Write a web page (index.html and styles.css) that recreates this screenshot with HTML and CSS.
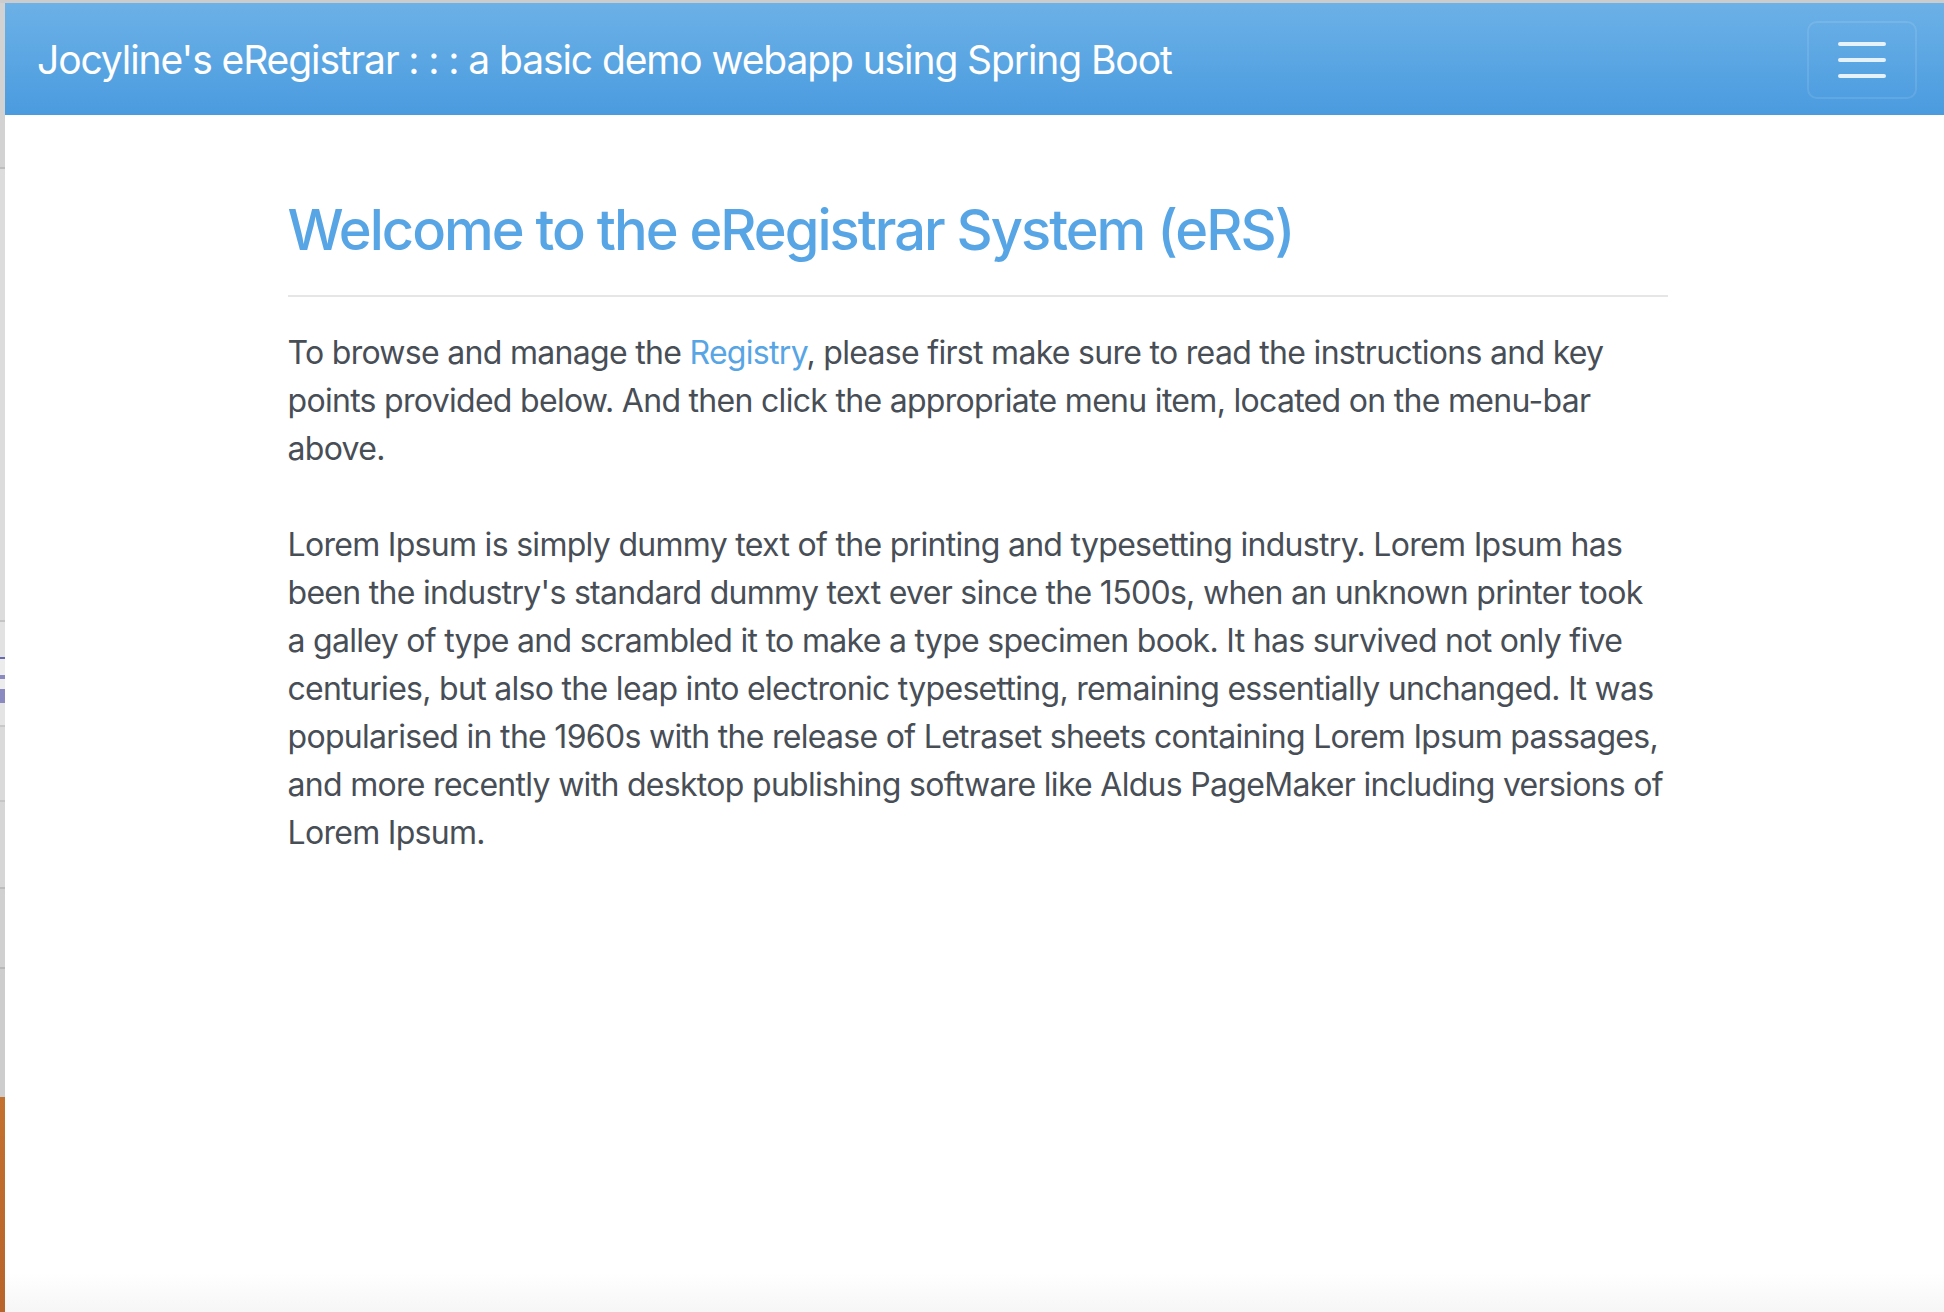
FILE: index.html
```html
<!DOCTYPE html>
<html lang="en">
<head>
<meta charset="utf-8">
<title>eRegistrar</title>
<link rel="stylesheet" href="styles.css">
</head>
<body>
<div class="topline"></div>
<div class="window">
  <div class="sidestrip"></div>
  <div class="page">
    <nav class="navbar">
      <a class="brand" href="#">Jocyline's eRegistrar : : : a basic demo webapp using Spring Boot</a>
      <button class="toggler" type="button" aria-label="Toggle navigation">
        <svg class="toggler-icon" width="60" height="60" viewBox="0 0 30 30"><path d="M4 7h22M4 15h22M4 23h22" stroke="rgba(255,255,255,0.85)" stroke-width="2" stroke-linecap="round" fill="none"/></svg>
      </button>
    </nav>
    <main class="content">
      <div class="container">
        <h3 class="title">Welcome to the eRegistrar System (eRS)</h3>
        <hr class="rule">
        <p class="text">To browse and manage the <a class="link" href="#">Registry</a>, please first make sure to read the instructions and key points provided below. And then click the appropriate menu item, located on the menu-bar above.</p>
        <p class="text">Lorem Ipsum is simply dummy text of the printing and typesetting industry. Lorem Ipsum has been the industry's standard dummy text ever since the 1500s, when an unknown printer took a galley of type and scrambled it to make a type specimen book. It has survived not only five centuries, but also the leap into electronic typesetting, remaining essentially unchanged. It was popularised in the 1960s with the release of Letraset sheets containing Lorem Ipsum passages, and more recently with desktop publishing software like Aldus PageMaker including versions of Lorem Ipsum.</p>
      </div>
    </main>
  </div>
</div>
</body>
</html>
```

FILE: styles.css
```css
html, body {
  margin: 0;
  padding: 0;
  height: 100%;
}
body {
  font-family: Inter, "Noto Sans", sans-serif;
  background: #ffffff;
  overflow: hidden;
}
.topline {
  height: 3px;
  background: #cccccc;
}
.window {
  display: flex;
  height: 1309px;
}
.sidestrip {
  width: 5px;
  flex: none;
  background: linear-gradient(to bottom,
    #d2d2d2 0px, #d2d2d2 164px, #bdbdbd 164px, #bdbdbd 166px,
    #dcdcdc 166px, #dcdcdc 617px, #c4c4c4 617px, #c4c4c4 619px,
    #e2e2e2 619px, #e2e2e2 654px, #6868b0 654px, #6868b0 656px,
    #ececec 656px, #ececec 672px, #8a8ac0 672px, #8a8ac0 676px,
    #ececec 676px, #ececec 686px, #8a8ac0 686px, #8a8ac0 700px,
    #e4e4e4 700px, #e4e4e4 722px, #c8c8c8 722px, #c8c8c8 724px,
    #dadada 724px, #dadada 797px, #c6c6c6 797px, #c6c6c6 799px,
    #d6d6d6 799px, #d6d6d6 884px, #bcbcbc 884px, #bcbcbc 886px,
    #d0d0d0 886px, #d0d0d0 964px, #b8b8b8 964px, #b8b8b8 966px,
    #cdcdcd 966px, #cdcdcd 1094px,
    #c4702e 1094px, #b8642a 1309px);
}
.page {
  flex: 1;
  display: flex;
  flex-direction: column;
  background: linear-gradient(to bottom, #ffffff 0, #ffffff 1270px, #f6f6f6 1309px);
}
.navbar {
  display: flex;
  align-items: center;
  justify-content: space-between;
  height: 112px;
  box-sizing: border-box;
  padding: 0 27px 0 32px;
  background: linear-gradient(to bottom, #6cb1e7 0%, #4a9bdf 100%);
}
.brand {
  margin-top: 2px;
  color: #ffffff;
  font-size: 39px;
  line-height: 60px;
  letter-spacing: -1.1px;
  text-decoration: none;
  white-space: nowrap;
}
.toggler {
  width: 110px;
  height: 78px;
  margin-top: 2px;
  padding: 0;
  display: flex;
  align-items: center;
  justify-content: center;
  background: transparent;
  border: 2px solid rgba(255, 255, 255, 0.1);
  border-radius: 10px;
}
.toggler-icon {
  display: block;
}
.content {
  padding-left: 6px;
}
.container {
  width: 1380px;
  margin: 0 auto;
  padding-top: 82px;
}
.title {
  margin: 0;
  color: #57a5e5;
  font-size: 56px;
  font-weight: 500;
  line-height: 67px;
  letter-spacing: -2px;
}
.rule {
  margin: 31px 0 32px;
  border: 0;
  border-top: 2px solid #e6e6e6;
}
.text {
  margin: 0 0 48px;
  color: #484e56;
  font-size: 32px;
  line-height: 48px;
  letter-spacing: -0.7px;
}
.link {
  color: #57a5e5;
  text-decoration: none;
}
```
